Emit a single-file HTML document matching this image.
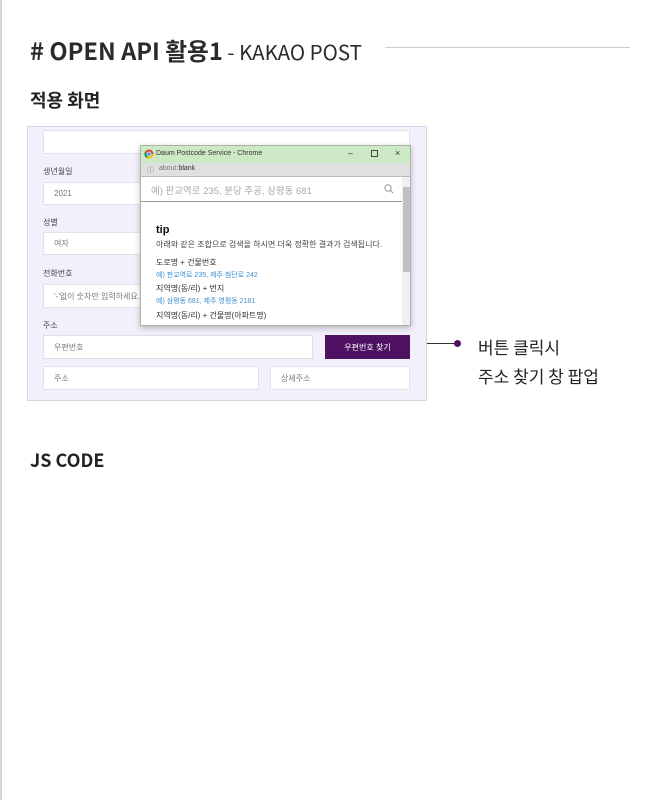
<!DOCTYPE html>
<html><head><meta charset="utf-8">
<style>
*{margin:0;padding:0;box-sizing:border-box}
body{width:660px;height:800px;background:#fff;position:relative;overflow:hidden;font-family:"Liberation Sans","Noto Sans CJK KR",sans-serif;color:#222}
.a{position:absolute;white-space:nowrap}
.n{font-family:"Noto Sans CJK KR",sans-serif}
.inp{position:absolute;background:#fff;border:1px solid #e3e0ea;font-size:8px;color:#777;padding-left:10px;display:flex;align-items:center}
.lbl{position:absolute;font-size:8px;color:#444}
</style></head><body>
<div class="a" style="left:0;top:0;width:2px;height:800px;background:#d6d6d6"></div>
<div class="a n" style="left:30px;top:33px;font-size:23.7px;font-weight:bold;color:#2a2a2a;line-height:34px">#  OPEN API 활용1<span style="font-weight:normal;font-size:20.5px"> - KAKAO POST</span></div>
<div class="a" style="left:385px;top:47px;width:245px;height:1px;background:#ccc"></div>
<div class="a n" style="left:30px;top:87px;font-size:18px;font-weight:bold;color:#222;line-height:26px">적용 화면</div>

<div class="a" style="left:27px;top:126px;width:400px;height:275px;background:#f3f0fc;border:1px solid #d9d4e4"></div>
<div class="inp" style="left:43px;top:130px;width:367px;height:24px"></div>
<div class="lbl" style="left:43px;top:166px">생년월일</div>
<div class="inp" style="left:43px;top:182px;width:100px;height:23px">2021</div>
<div class="lbl" style="left:43px;top:217px">성별</div>
<div class="inp" style="left:43px;top:232px;width:100px;height:23px">여자</div>
<div class="lbl" style="left:43px;top:268px">전화번호</div>
<div class="inp" style="left:43px;top:284px;width:100px;height:24px">'-'없이 숫자만 입력하세요.</div>
<div class="lbl" style="left:43px;top:320px">주소</div>
<div class="inp" style="left:43px;top:335px;width:270px;height:24px">우편번호</div>
<div class="a" style="left:325px;top:335px;width:85px;height:24px;background:#4f1263;color:#fff;font-size:8px;display:flex;align-items:center;justify-content:center">우편번호 찾기</div>
<div class="inp" style="left:43px;top:366px;width:216px;height:24px">주소</div>
<div class="inp" style="left:270px;top:366px;width:140px;height:24px">상세주소</div>

<div class="a" style="left:140px;top:145px;width:271px;height:181px;background:#fff;border:1px solid #a7b8a2;box-shadow:0 2px 6px rgba(0,0,0,.25);overflow:hidden">
 <div class="a" style="left:0;top:0;width:271px;height:17px;background:#cce8c4;font-size:7px;color:#333">
  <svg class="a" style="left:3px;top:3px" width="10" height="10" viewBox="0 0 10 10"><circle cx="5" cy="5" r="4.5" fill="#db4437"/><path d="M5 5 L9.5 5 A4.5 4.5 0 0 1 2.8 8.9Z" fill="#f4c20d"/><path d="M5 5 L2.8 8.9 A4.5 4.5 0 0 1 0.6 3.5Z" fill="#0f9d58"/><circle cx="5" cy="5" r="2" fill="#4285f4" stroke="#fff" stroke-width=".7"/></svg>
  <span class="a" style="left:15px;top:4px">Daum Postcode Service - Chrome</span>
  <span class="a" style="left:207px;top:2px;font-size:9px">–</span>
  <span class="a" style="left:230px;top:4px;width:7px;height:7px;border:1px solid #444"></span>
  <span class="a" style="left:254px;top:2px;font-size:9px">×</span>
 </div>
 <div class="a" style="left:0;top:17px;width:271px;height:14px;background:#e0e0e0;font-size:7px;color:#777;border-bottom:1px solid #bbb">
  <span class="a" style="left:6px;top:2px">ⓘ</span><span class="a" style="left:18px;top:2px">about:<b style="font-weight:normal;color:#333">blank</b></span>
 </div>
 <div class="a" style="left:0;top:31px;width:261px;height:25px;border-bottom:1px solid #999;font-size:9.5px;color:#aaa"><span class="a" style="left:10px;top:6px">예) 판교역로 235, 분당 주공, 삼평동 681</span>
  <svg class="a" style="left:243px;top:7px" width="10" height="10" viewBox="0 0 10 10"><circle cx="4" cy="4" r="3.2" fill="none" stroke="#999" stroke-width="1"/><path d="M6.4 6.4L9 9" stroke="#999" stroke-width="1.2"/></svg></div>
 <div class="a" style="left:261px;top:31px;width:10px;height:150px;background:#f0f0f0"><div class="a" style="left:1px;top:10px;width:8px;height:85px;background:#c1c1c1"></div></div>
 <div class="a" style="left:15px;top:78px;font-size:11px;font-weight:bold;color:#111">tip</div>
 <div class="a" style="left:15px;top:93px;font-size:8px;color:#444">아래와 같은 조합으로 검색을 하시면 더욱 정확한 결과가 검색됩니다.</div>
 <div class="a" style="left:15px;top:111px;font-size:8px;color:#333">도로명 + 건물번호</div>
 <div class="a" style="left:15px;top:124px;font-size:7px;color:#3d8fd1">예) 판교역로 235,  제주 첨단로 242</div>
 <div class="a" style="left:15px;top:137px;font-size:8px;color:#333">지역명(동/리) + 번지</div>
 <div class="a" style="left:15px;top:150px;font-size:7px;color:#3d8fd1">예) 삼평동 681,  제주 영평동 2181</div>
 <div class="a" style="left:15px;top:164px;font-size:8px;color:#333">지역명(동/리) + 건물명(아파트명)</div>
</div>

<div class="a" style="left:427px;top:343px;width:30px;height:1px;background:#333"></div>
<div class="a" style="left:454px;top:340px;width:7px;height:7px;border-radius:50%;background:#4f1263"></div>
<div class="a n" style="left:478px;top:332px;font-size:17px;color:#222;line-height:29px">버튼 클릭시<br>주소 찾기 창 팝업</div>

<div class="a n" style="left:30px;top:447px;font-size:18px;font-weight:bold;color:#222;line-height:26px">JS CODE</div>
</body></html>
